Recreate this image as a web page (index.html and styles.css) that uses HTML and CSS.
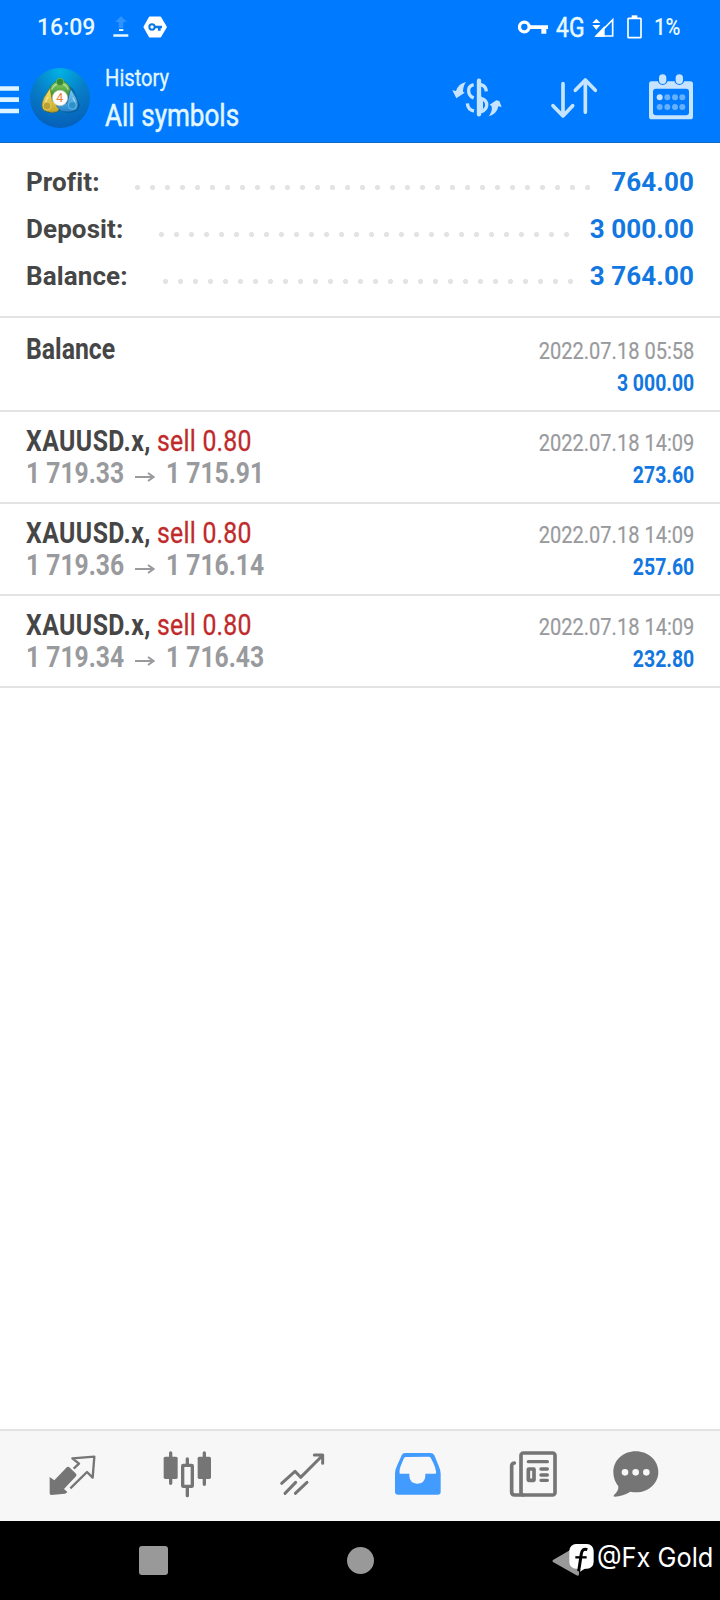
FILE: index.html
```html
<!DOCTYPE html>
<html lang="en">
<head>
<meta charset="utf-8">
<title>History</title>
<link rel="stylesheet" href="styles.css">
</head>
<body>
<div class="screen">
  <header class="top">
    <div class="status">
      <span class="time">16:09</span>
      <svg class="st-upload" width="16" height="24" viewBox="338 46 48 72"><path fill="#2f93ff" d="M362 50l18 17h-11v18h-14V67h-11z"/><path fill="#e8f8ff" d="M356 88h13v6h-13zM339 104h45v7h-45z"/></svg>
      <svg class="st-hex" width="24" height="24" viewBox="430 43 72 72"><path fill="#fff" stroke="#fff" stroke-width="5" stroke-linejoin="round" d="M450 50h32l17 29-17 29h-32l-16-29z"/><circle cx="457" cy="79" r="8" fill="none" stroke="#0a78e8" stroke-width="6"/><path fill="#0a78e8" d="M464 75h23v8h-4v7h-8v-7h-11z"/></svg>
      <span class="grow"></span>
      <svg class="st-key" width="30" height="24" viewBox="264 43 90 72"><circle cx="283" cy="79" r="14.500" fill="none" stroke="#fff" stroke-width="10"/><path fill="#fff" d="M298 74h56v11h-5v14h-15V85h-36z"/></svg>
      <span class="net">4G</span>
      <svg class="st-signal" width="22" height="24" viewBox="488 43 66 72"><path fill="#fff" d="M489 67l12-13 12 13zM489 73h24l-12 14zM495 108l31-32v32z"/><path fill="none" stroke="#fff" stroke-width="5" d="M502 106l48-49v49z"/></svg>
      <svg class="st-bat" width="15" height="24" viewBox="591 44 45 72"><path fill="#fff" d="M605 45h17v8h-17z"/><rect x="594" y="54" width="39" height="58" rx="2" fill="none" stroke="#fff" stroke-width="5"/></svg>
      <span class="pct">1%</span>
    </div>
    <div class="toolbar">
      <svg class="menu" width="19" height="28" viewBox="0 257 57 84"><path fill="#def5ff" d="M0 258h57v13H0zM0 291h57v14H0zM0 325h57v14H0z"/></svg>
      <svg class="logo" width="60" height="60" viewBox="90 204 180 180">
        <defs>
          <radialGradient id="disc" cx=".5" cy=".05" r=".9"><stop offset="0" stop-color="#00b2e4"/><stop offset=".5" stop-color="#077fc8"/><stop offset="1" stop-color="#0662ba"/></radialGradient>
          <linearGradient id="green" x2="0" y2="1"><stop stop-color="#8ed060"/><stop offset="1" stop-color="#2e8d32"/></linearGradient>
          <linearGradient id="yellow" x2="0" y2="1"><stop stop-color="#f5e968"/><stop offset="1" stop-color="#c3a325"/></linearGradient>
          <linearGradient id="blue" x2="0" y2="1"><stop stop-color="#7fd0f5"/><stop offset="1" stop-color="#2484cf"/></linearGradient>
        </defs>
        <circle cx="180" cy="294" r="90" fill="url(#disc)"/>
        <path d="M126 324q12 20 42 14l12-8q20 16 52 2l8-16-20-50-38-22-36 24z" fill="#044c86" opacity=".5"/>
        <path d="M148 276q0-22 21-31h22q21 9 21 31v14h-64z" fill="url(#green)" stroke="#39722d" stroke-width="2"/>
        <path d="M150 265l-18 28q-12 26 0 38 19 10 39 4l16-18-30-14z" fill="url(#yellow)" stroke="#897a26" stroke-width="2"/>
        <path d="M212 266l16 26q12 24 1 38-22 9-45 4l-15-17 32-8z" fill="url(#blue)" stroke="#175d91" stroke-width="2"/>
        <path d="M156 268q6-14 15-15M204 268q-6-14-15-15M144 292q-6 9-8 15M219 294q5 8 6 12" fill="none" stroke="#fff" stroke-width="4" stroke-linecap="round" opacity=".5"/>
        <circle cx="180" cy="246" r="11" fill="#338b33" stroke="#82bf62" stroke-width="2"/>
        <circle cx="141" cy="318" r="12" fill="#bda034" stroke="#eadb75" stroke-width="2"/>
        <circle cx="217" cy="316" r="12" fill="#2e91ca" stroke="#80cef0" stroke-width="2"/>
        <circle cx="180" cy="294" r="23" fill="#fff" stroke="#c5c9b4" stroke-width="2"/>
        <text class="logo-num" x="179" y="307" text-anchor="middle">4</text>
      </svg>
      <div class="titles">
        <span class="subtitle">History</span>
        <span class="title">All symbols</span>
      </div>
      <svg class="tool" width="50" height="50" viewBox="66 215 150 150">
        <path fill="#c6e4ff" d="M67 270l11 2q7-22 30-27-9 12-9 29l5 3-25 17zM215 320l-10-2q-4 23-29 30 12-15 9-30l-6-5 20-13 9 2z"/>
        <path fill="none" stroke="#c6e4ff" stroke-width="10" d="M131 253q-17 4-15 20 1 14 15 20M112 309q2 20 20 23M152 253q16 4 17 20M152 294q20 5 18 22-1 13-18 19"/>
        <path stroke="#c6e4ff" stroke-width="13" stroke-linecap="round" d="M147 241v101"/><path fill="#c6e4ff" d="M150 278l9 25v25h-9z"/>
      </svg>
      <svg class="tool" width="50" height="50" viewBox="357 215 150 150"><path fill="none" stroke="#c6e4ff" stroke-width="11" stroke-linecap="round" stroke-linejoin="round" d="M399 250v96M369 316l30 31 29-31"/><path fill="none" stroke="#c6e4ff" stroke-width="11" stroke-linecap="round" stroke-linejoin="round" d="M466 336v-94M436 270l30-31 30 31"/></svg>
      <svg class="tool" width="50" height="50" viewBox="648 215 150 150">
        <rect x="657" y="243" width="132" height="114" rx="8" fill="#c6e4ff"/>
        <rect x="669" y="265" width="108" height="80" rx="9" fill="#007aff"/>
        <path stroke="#007aff" stroke-width="30" stroke-linecap="round" d="M698 234v5M748 234v5"/>
        <path stroke="#c6e4ff" stroke-width="22" stroke-linecap="round" d="M698 233v7M748 233v7"/>
        <circle cx="689" cy="291" r="9" fill="#c6e4ff"/>
        <path stroke="#65b0ff" stroke-width="18" stroke-linecap="round" d="M712 291h0M735 291h0M757 291h0M689 320h0M712 320h0M735 320h0M757 320h0"/>
      </svg>
    </div>
  </header>

  <section class="summary">
    <div class="sum-row"><span class="label">Profit:</span><i class="dots"></i><span class="amount">764.00</span></div>
    <div class="sum-row"><span class="label">Deposit:</span><i class="dots"></i><span class="amount">3 000.00</span></div>
    <div class="sum-row"><span class="label">Balance:</span><i class="dots"></i><span class="amount">3 764.00</span></div>
  </section>

  <main class="list">
    <article class="deal deal-first">
      <div class="left"><div class="name">Balance</div></div>
      <div class="right"><div class="date">2022.07.18 05:58</div><div class="gain">3 000.00</div></div>
    </article>
    <article class="deal">
      <div class="left"><div class="name"><span class="symbol">XAUUSD.x,</span> <span class="sell">sell 0.80</span></div><div class="price"><span>1 719.33</span><svg class="arrow" width="20" height="12" viewBox="0 0 20 12"><path d="M0 6h18M13 2l5.500 4-5.500 4"/></svg><span>1 715.91</span></div></div>
      <div class="right"><div class="date">2022.07.18 14:09</div><div class="gain">273.60</div></div>
    </article>
    <article class="deal">
      <div class="left"><div class="name"><span class="symbol">XAUUSD.x,</span> <span class="sell">sell 0.80</span></div><div class="price"><span>1 719.36</span><svg class="arrow" width="20" height="12" viewBox="0 0 20 12"><path d="M0 6h18M13 2l5.500 4-5.500 4"/></svg><span>1 716.14</span></div></div>
      <div class="right"><div class="date">2022.07.18 14:09</div><div class="gain">257.60</div></div>
    </article>
    <article class="deal">
      <div class="left"><div class="name"><span class="symbol">XAUUSD.x,</span> <span class="sell">sell 0.80</span></div><div class="price"><span>1 719.34</span><svg class="arrow" width="20" height="12" viewBox="0 0 20 12"><path d="M0 6h18M13 2l5.500 4-5.500 4"/></svg><span>1 716.43</span></div></div>
      <div class="right"><div class="date">2022.07.18 14:09</div><div class="gain">232.80</div></div>
    </article>
  </main>

  <nav class="tabs">
    <svg width="48" height="48" viewBox="145 90 144 144"><path fill="#757575" d="M150 171l14 10 38-40q4-2 7 1l20 19q3 4 0 8l-36 38 10 9q-2 4-7 5l-41 4q-5 0-5-5z"/><path fill="none" stroke="#757575" stroke-width="7" stroke-linejoin="round" d="M222 146l16-15-20-16 66-5-5 63-17-17-50 49"/></svg>
    <svg width="48" height="48" viewBox="489 90 144 144"><g stroke="#757575" stroke-linecap="round" stroke-width="10"><path d="M512 99v91M613 99v94M562 117v20M562 202v25"/></g><rect x="491" y="110" width="42" height="67" rx="5" fill="#757575"/><rect x="593" y="110" width="40" height="67" rx="5" fill="#757575"/><rect x="548" y="136" width="29" height="63" rx="2" fill="#f7f7f7" stroke="#757575" stroke-width="10"/></svg>
    <svg width="48" height="48" viewBox="834 90 144 144"><path fill="none" stroke="#757575" stroke-width="9" stroke-linecap="round" stroke-linejoin="round" d="M845 190l40-36 17 18 64-64M943 105h25v25M855 220l32-33M886 220l35-33"/></svg>
    <svg width="48" height="48" viewBox="102 90 144 144"><path fill="#429cff" fill-rule="evenodd" d="M135 99h76q8 0 12 7l13 31q6 14 6 24v54q0 9-9 9H114q-9 0-9-9v-54q0-12 6-24l14-31q3-7 10-7zM137 111q-4 0-6 5l-10 25q-4 10-2 20h29v8q2 22 23 22 24 0 25-23v-7h30q4 0 2-7-2-13-8-25l-8-16q-2-3-6-3z"/></svg>
    <svg width="48" height="48" viewBox="447 90 144 144"><g fill="none" stroke="#757575" stroke-width="11"><rect x="483" y="99" width="102" height="126" rx="7"/><path stroke-linecap="round" d="M463 129q-8 1-8 9v78q0 9 9 9h25"/><rect x="505" y="147" width="17" height="34" rx="1"/><path stroke-width="10" stroke-linecap="round" d="M505 125h57M543 147h19M543 165h19M543 181h19"/></g></svg>
    <svg width="48" height="48" viewBox="757 90 144 144"><path fill="#757575" d="M828 94c38 0 68 27 68 62 0 40-40 69-84 59-14 8-31 15-47 15-3 0-4-2-2-5 9-8 14-16 13-26-9-11-15-25-15-42 0-36 29-63 67-63z"/><path stroke="#f7f7f7" stroke-width="20" stroke-linecap="round" d="M796 157h0M828 157h0M860 157h0"/></svg>
  </nav>

  <footer class="sysnav">
    <span class="recent"></span>
    <span class="home"></span>
    <svg class="back" width="28" height="30" viewBox="0 0 28 30"><path fill="#999" d="M1 14L25 0q2-1 2 2v26q0 3-3 1L1 16q-1-1 0-2z"/></svg>
    <div class="mark">
      <svg width="25" height="28" viewBox="628 372 75 84"><rect x="629" y="372" width="73" height="74" rx="20" fill="#fff"/><path fill="none" stroke="#000" stroke-width="9" d="M683 389q-15-5-18 12l-8 53"/><path stroke="#000" stroke-width="7" d="M647 412h34"/><path fill="#fff" d="M664 442l16 1-19 12z"/></svg>
      <span class="handle">@Fx Gold</span>
    </div>
  </footer>
</div>
</body>
</html>
```
FILE: styles.css
```css
* { box-sizing: border-box; }
body { margin: 0; font-family: Roboto, "Liberation Sans", sans-serif; }
svg { display: block; flex: none; }
.screen { width: 720px; height: 1600px; display: flex; flex-direction: column; background: #fff; overflow: hidden; }

.top { height: 143px; background: #007aff; border-bottom: 1px solid #0f6bc4; flex: none; }
.status { height: 54px; display: flex; align-items: center; padding: 0 36px 0 37px; color: #e8f8ff; font-size: 23px; font-weight: 500; }
.grow { flex: 1; }
.time { width: 76px; }
.st-hex { margin-left: 14px; }
.net { font-size: 28px; font-weight: 400; width: 28px; margin: 0 8px; transform: scaleX(.82); transform-origin: 0 50%; -webkit-text-stroke: .5px #e8f8ff; }
.st-bat { margin-left: 13px; }
.pct { width: 30px; margin-left: 12px; font-size: 23px; transform: scaleX(.88); transform-origin: 0 50%; }

.toolbar { height: 88px; display: flex; align-items: center; padding-right: 24px; }
.menu { margin-top: 3px; }
.logo { margin-left: 11px; }
.logo-num { font: 400 37px Roboto, sans-serif; fill: #ed7d35; }
.titles { flex: 1; margin-left: 15px; color: #e3f7ff; display: flex; flex-direction: column; align-items: flex-start; }
.subtitle, .title { white-space: nowrap; transform-origin: 0 50%; }
.subtitle { font-size: 24px; line-height: 34px; transform: scaleX(.84); -webkit-text-stroke: .3px #e3f7ff; }
.title { font-size: 32px; line-height: 40px; transform: scaleX(.815); -webkit-text-stroke: .5px #e3f7ff; }
.tool { margin-left: 47px; margin-top: -2px; }

.summary { height: 175px; padding: 15px 26px 0; border-bottom: 2px solid #e3e3e3; flex: none; }
.sum-row { display: flex; align-items: center; height: 47px; font-size: 26px; letter-spacing: .1px; font-weight: 700; color: #464646; }
.dots { flex: 1; height: 15px; margin: 12px 12px 0 30.5px; background: radial-gradient(circle at 7.5px 7.5px, #e3e3e3 2.2px, transparent 2.9px) 0 0 / 15px 15px repeat-x; }
.amount { color: #1277e0; }

.list { flex: 1; }
.deal { display: flex; justify-content: space-between; height: 92px; padding: 11px 26px 0; border-bottom: 2px solid #e3e3e3; }
.deal-first { height: 94px; padding-top: 13px; }
.left > div { transform-origin: 0 50%; white-space: nowrap; }
.right > div { transform-origin: 100% 50%; white-space: nowrap; }
.name { font-size: 29px; line-height: 36px; font-weight: 700; color: #464646; transform: scaleX(.855); }
.symbol { letter-spacing: .52px; }
.sell { font-weight: 400; letter-spacing: .3px; color: #c02a2a; -webkit-text-stroke: .3px #c02a2a; }
.price { display: flex; align-items: center; font-size: 29px; line-height: 28px; font-weight: 700; color: #999a9d; }
.price span { display: block; width: 98px; transform: scaleX(.85); transform-origin: 0 50%; }
.arrow { margin: 7px 11px 0 11px; fill: none; stroke: #999a9d; stroke-width: 2; }
.right { text-align: right; padding-top: 4px; }
.date { font-size: 24px; line-height: 32px; color: #999a9d; transform: scaleX(.835); -webkit-text-stroke: .2px #999a9d; }
.gain { font-size: 24px; line-height: 32px; font-weight: 700; color: #1277e0; transform: scaleX(.81); }

.tabs { height: 92px; flex: none; display: grid; grid-template-columns: repeat(4, 115.1px) 103.6px 48px; padding: 19px 0 0 48.3px; border-top: 2px solid #e3e3e3; background: #f7f7f7; }

.sysnav { position: relative; height: 79px; flex: none; display: flex; align-items: center; background: #000; padding-left: 139px; }
.recent { width: 29px; height: 29px; border-radius: 3px; background: #999; }
.home { width: 27px; height: 27px; border-radius: 50%; background: #999; margin-left: 179px; }
.back { margin-left: 178px; }
.mark { position: absolute; left: 569px; top: 21px; display: flex; align-items: center; color: #fff; }
.handle { margin-left: 3px; font: 400 27px/32px Inter, Roboto, sans-serif; white-space: nowrap; transform: scaleX(.94); transform-origin: 0 50%; }
```
